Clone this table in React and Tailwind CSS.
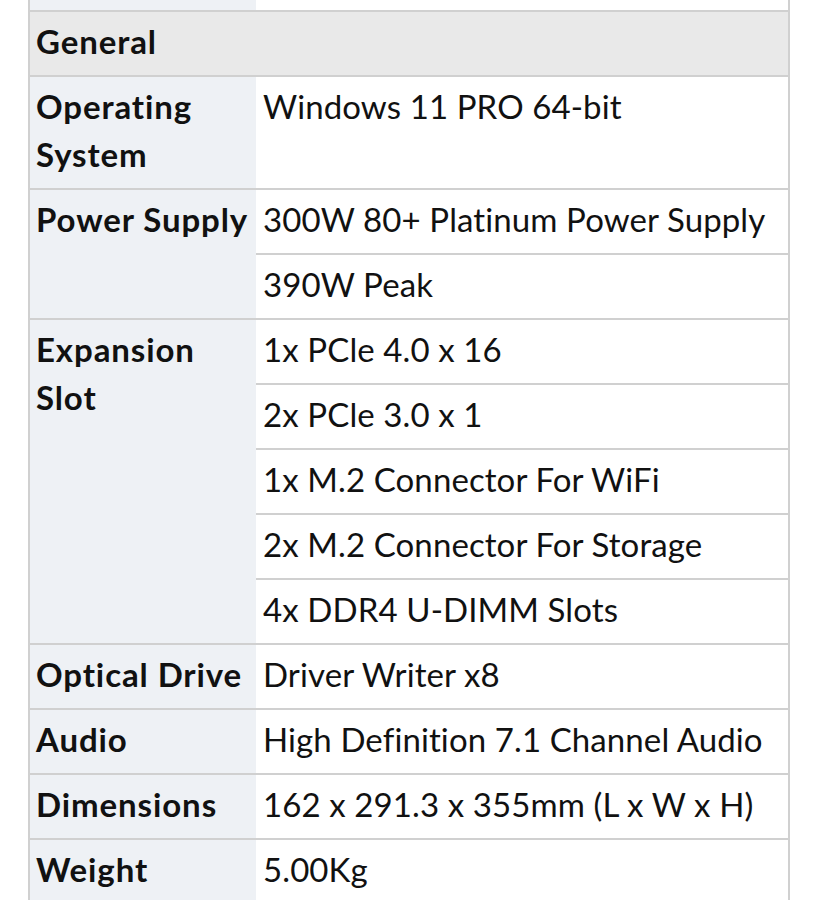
const groups = [
  { label: ["Operating", "System"], values: ["Windows 11 PRO 64-bit"] },
  { label: ["Power Supply"], values: ["300W 80+ Platinum Power Supply", "390W Peak"] },
  {
    label: ["Expansion", "Slot"],
    values: [
      "1x PCle 4.0 x 16",
      "2x PCle 3.0 x 1",
      "1x M.2 Connector For WiFi",
      "2x M.2 Connector For Storage",
      "4x DDR4 U-DIMM Slots",
    ],
  },
  { label: ["Optical Drive"], values: ["Driver Writer x8"] },
  { label: ["Audio"], values: ["High Definition 7.1 Channel Audio"] },
  { label: ["Dimensions"], values: ["162 x 291.3 x 355mm (L x W x H)"] },
  { label: ["Weight"], values: ["5.00Kg"] },
];

export default function App() {
  return (
    <div
      className="h-[900px] overflow-hidden bg-white text-[33px] leading-[48px] text-[#111] [font-variant-ligatures:none]"
      style={{ fontFamily: "Lato, 'Noto Sans', sans-serif" }}
    >
      <div className="ml-[28px] w-[762px] border-x-2 border-[#d0d0d0]">
        {/* partial row above */}
        <div className="flex h-[12px] border-b-2 border-[#d0d0d0]">
          <div className="w-[226px] bg-[#eef1f5]" />
          <div className="flex-1 bg-white" />
        </div>

        {/* section header */}
        <div className="h-[65px] border-b-2 border-[#d0d0d0] bg-[#e9e9e9] pl-[6px] pt-[5px] font-bold tracking-[0.9px]">
          General
        </div>

        {groups.map((g) => (
          <div key={g.label.join(" ")} className="flex border-b-2 border-[#d0d0d0]">
            <div className="w-[226px] shrink-0 bg-[#eef1f5] pl-[6px] pt-[5px] pb-[10px] font-bold tracking-[0.9px] whitespace-nowrap">
              {g.label.map((l) => (
                <div key={l}>{l}</div>
              ))}
            </div>
            <div className="flex flex-1 flex-col bg-white">
              {g.values.map((v, i) => (
                <div
                  key={v}
                  className={`pl-[7px] pt-[5px] pb-[10px] whitespace-nowrap tracking-[0.1px] ${
                    i < g.values.length - 1 ? "border-b-2 border-[#d0d0d0]" : ""
                  }`}
                >
                  {v}
                </div>
              ))}
            </div>
          </div>
        ))}
      </div>
    </div>
  );
}
